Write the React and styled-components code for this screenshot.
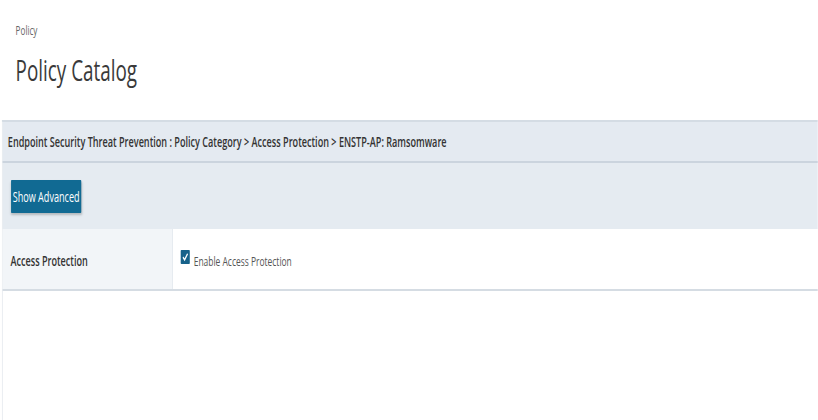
import styled, { createGlobalStyle } from "styled-components";

// the reference is a wide page squeezed horizontally; lay it out at full width and squeeze once
const SQUEEZE = 0.65;

const GlobalStyle = createGlobalStyle`
  html, body {
    margin: 0;
    padding: 0;
    overflow: hidden;
    background: #ffffff;
  }
  body {
    font-family: "Open Sans", "Liberation Sans", sans-serif;
  }
`;

const App = () => {
  return (
    <>
      <GlobalStyle />
      <Page>
        <Header>
          <Crumb>Policy</Crumb>
          <Title>Policy Catalog</Title>
        </Header>
        <Panel>
          <Breadcrumb>
            Endpoint Security Threat Prevention : Policy Category &gt; Access
            Protection &gt; ENSTP-AP: Ramsomware
          </Breadcrumb>
          <Toolbar>
            <Button>Show Advanced</Button>
          </Toolbar>
          <Row>
            <LabelCell>Access Protection</LabelCell>
            <ValueCell>
              <Check>
                <svg width="10" height="10" viewBox="0 0 10 10">
                  <polyline
                    points="1.5,5.2 4,7.8 8.6,1.8"
                    fill="none"
                    stroke="#ffffff"
                    strokeWidth="1.8"
                  />
                </svg>
              </Check>
              <CheckText>Enable Access Protection</CheckText>
            </ValueCell>
          </Row>
          <Empty />
        </Panel>
      </Page>
    </>
  );
};

const Page = styled.div`
  width: ${818 / SQUEEZE}px;
  height: 420px;
  display: flex;
  flex-direction: column;
  transform: scaleX(${SQUEEZE});
  transform-origin: 0 0;
`;
const Header = styled.header`
  display: flex;
  flex-direction: column;
  padding: 23px 24px 0;
  height: 120px;
  box-sizing: border-box;
`;
const Crumb = styled.div`
  font-size: 12.5px;
  line-height: 16px;
  color: #666;
`;
const Title = styled.h1`
  margin: 11px 0 0;
  font-size: 29px;
  line-height: 40px;
  font-weight: 400;
  color: #3a3a3a;
`;
const Panel = styled.section`
  flex: 1;
  display: flex;
  flex-direction: column;
  margin-left: 3px;
  border-top: 2px solid #d4dce4;
  border-left: 1px solid #dde3e9;
`;
const Breadcrumb = styled.div`
  height: 39px;
  display: flex;
  align-items: center;
  padding-left: 8px;
  background: #e4eaf1;
  border-bottom: 2px solid #cbd4de;
  font-size: 14px;
  font-weight: 600;
  color: #333;
  white-space: nowrap;
`;
const Toolbar = styled.div`
  height: 66px;
  box-sizing: border-box;
  padding: 17px 13px 0;
  background: #e5ebf1;
`;
const Button = styled.button`
  height: 33px;
  width: 108px;
  padding: 0;
  border: none;
  border-radius: 1px;
  background: #116a93;
  color: #ffffff;
  font-family: "Open Sans", "Liberation Sans", sans-serif;
  font-size: 14px;
  box-shadow: 0 2px 3px rgba(0, 0, 0, 0.22);
  cursor: pointer;
`;
const Row = styled.div`
  height: 60px;
  display: flex;
  border-bottom: 2px solid #d5dce3;
`;
const LabelCell = styled.div`
  width: 262px;
  display: flex;
  align-items: center;
  padding: 2px 0 0 12px;
  box-sizing: border-box;
  background: #f2f5f8;
  border-right: 1px solid #dfe5eb;
  font-size: 14px;
  font-weight: 600;
  color: #333;
`;
const ValueCell = styled.div`
  flex: 1;
  display: flex;
  align-items: flex-start;
  gap: 6px;
  padding: 21px 0 0 12px;
`;
const Check = styled.span`
  width: 14px;
  height: 14px;
  display: flex;
  align-items: center;
  justify-content: center;
  background: #17628a;
  border-radius: 1px;
`;
const CheckText = styled.span`
  margin-top: 1px;
  font-size: 13px;
  line-height: 20px;
  color: #555;
`;
const Empty = styled.div`
  flex: 1;
`;

export default App;
